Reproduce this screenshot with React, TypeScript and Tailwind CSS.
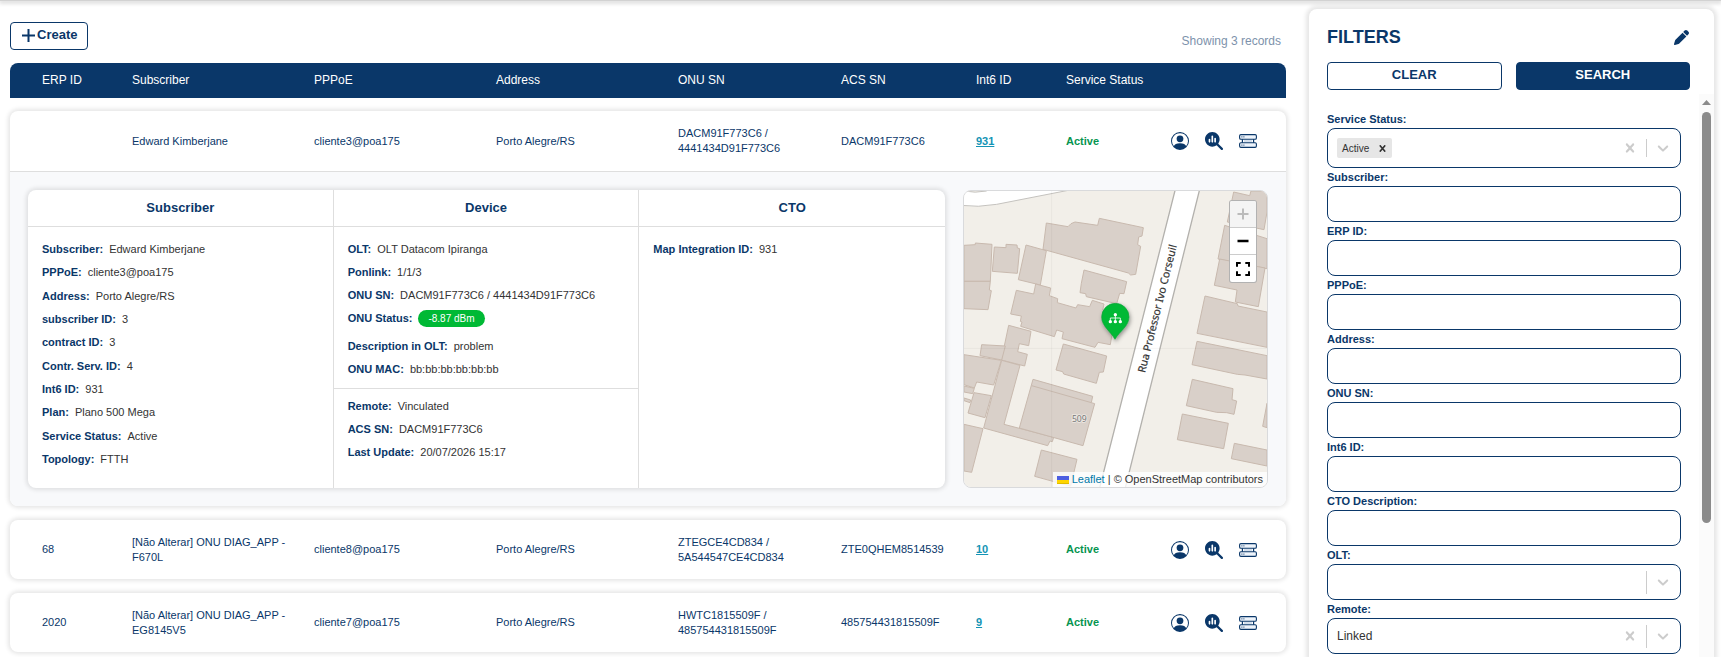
import React from "react";
import { BsPersonCircle } from "react-icons/bs";
import { FaMagnifyingGlassChart, FaPen } from "react-icons/fa6";

type Row = {
  erp: string;
  subscriber: string;
  pppoe: string;
  address: string;
  onu: string;
  acs: string;
  int6: string;
  status: string;
};

type Detail = { label: string; value: string; pill?: boolean };

const rows: Row[] = [
  { erp: "", subscriber: "Edward Kimberjane", pppoe: "cliente3@poa175", address: "Porto Alegre/RS", onu: "DACM91F773C6 / 4441434D91F773C6", acs: "DACM91F773C6", int6: "931", status: "Active" },
  { erp: "68", subscriber: "[Não Alterar] ONU DIAG_APP - F670L", pppoe: "cliente8@poa175", address: "Porto Alegre/RS", onu: "ZTEGCE4CD834 / 5A544547CE4CD834", acs: "ZTE0QHEM8514539", int6: "10", status: "Active" },
  { erp: "2020", subscriber: "[Não Alterar] ONU DIAG_APP - EG8145V5", pppoe: "cliente7@poa175", address: "Porto Alegre/RS", onu: "HWTC1815509F / 485754431815509F", acs: "485754431815509F", int6: "9", status: "Active" },
];

const subscriberDetails: Detail[] = [
  { label: "Subscriber:", value: "Edward Kimberjane" },
  { label: "PPPoE:", value: "cliente3@poa175" },
  { label: "Address:", value: "Porto Alegre/RS" },
  { label: "subscriber ID:", value: "3" },
  { label: "contract ID:", value: "3" },
  { label: "Contr. Serv. ID:", value: "4" },
  { label: "Int6 ID:", value: "931" },
  { label: "Plan:", value: "Plano 500 Mega" },
  { label: "Service Status:", value: "Active" },
  { label: "Topology:", value: "FTTH" },
];

const deviceDetails: Detail[] = [
  { label: "OLT:", value: "OLT Datacom Ipiranga" },
  { label: "Ponlink:", value: "1/1/3" },
  { label: "ONU SN:", value: "DACM91F773C6 / 4441434D91F773C6" },
  { label: "ONU Status:", value: "-8.87 dBm", pill: true },
  { label: "Description in OLT:", value: "problem" },
  { label: "ONU MAC:", value: "bb:bb:bb:bb:bb:bb" },
];

const remoteDetails: Detail[] = [
  { label: "Remote:", value: "Vinculated" },
  { label: "ACS SN:", value: "DACM91F773C6" },
  { label: "Last Update:", value: "20/07/2026 15:17" },
];

const ctoDetails: Detail[] = [{ label: "Map Integration ID:", value: "931" }];

const rowGrid =
  "grid grid-cols-[90fr_182fr_182fr_182fr_163fr_135fr_90fr_105fr_87fr] items-center pl-8 pr-7";
const cardShadow = "shadow-[0_0_4px_2px_rgba(0,0,0,0.1)]";

function ServerStackIcon() {
  return (
    <svg viewBox="0 0 18 14" className="h-[14px] w-[18px]" fill="none" stroke="currentColor" aria-hidden="true">
      <path d="M3.4 5v4M14.6 5v4" strokeWidth="1.2" />
      <path d="M5 7h8" stroke="#c3d3e6" strokeWidth="1.4" />
      <rect x="0.6" y="0.6" width="16.8" height="4.6" rx="1.3" strokeWidth="1.1" fill="#eef4fb" />
      <rect x="0.6" y="8.8" width="16.8" height="4.6" rx="1.3" strokeWidth="1.1" fill="#eef4fb" />
      <path d="M2.4 2.9h1M4.4 2.9h1M2.4 11.1h1M4.4 11.1h1" strokeWidth="1" />
    </svg>
  );
}

function CrossIcon({ className }: { className: string }) {
  return (
    <svg viewBox="0 0 20 20" className={className} fill="currentColor" aria-hidden="true">
      <path d="M14.348 14.849c-0.469 0.469-1.229 0.469-1.697 0l-2.651-3.030-2.651 3.029c-0.469 0.469-1.229 0.469-1.697 0-0.469-0.469-0.469-1.229 0-1.697l2.758-3.15-2.759-3.152c-0.469-0.469-0.469-1.228 0-1.697s1.228-0.469 1.697 0l2.652 3.031 2.651-3.031c0.469-0.469 1.228-0.469 1.697 0s0.469 1.229 0 1.697l-2.758 3.152 2.758 3.15c0.469 0.469 0.469 1.229 0 1.698z" />
    </svg>
  );
}

function ChevronIcon() {
  return (
    <svg viewBox="0 0 20 20" className="size-[18px] shrink-0" fill="currentColor" aria-hidden="true">
      <path d="M4.516 7.548c0.436-0.446 1.043-0.481 1.576 0l3.908 3.747 3.908-3.747c0.533-0.481 1.141-0.446 1.574 0 0.436 0.445 0.408 1.197 0 1.615-0.406 0.418-4.695 4.502-4.695 4.502-0.217 0.223-0.502 0.335-0.787 0.335s-0.57-0.112-0.789-0.335c0 0-4.287-4.084-4.695-4.502s-0.436-1.17 0-1.615z" />
    </svg>
  );
}

function DetailList({ items, className }: { items: Detail[]; className: string }) {
  return (
    <dl className={`flex flex-col px-[14px] text-[11px] leading-[15px] ${className}`}>
      {items.map((d) => (
        <div key={d.label} className={`flex h-[15px] items-center gap-[6px] ${d.pill ? "mb-[5px]" : ""}`}>
          <dt className="font-bold text-[#0a3769]">{d.label}</dt>
          {d.pill ? (
            <dd className="rounded-full bg-[#00b935] px-[10px] text-[10px] leading-[17px] text-white">{d.value}</dd>
          ) : (
            <dd className="text-[#333]">{d.value}</dd>
          )}
        </div>
      ))}
    </dl>
  );
}

function PanelHeading({ children }: { children: React.ReactNode }) {
  return (
    <h3 className="border-b border-[#dedede] pb-px text-center text-[13px] leading-[35px] font-bold text-[#0a3769]">
      {children}
    </h3>
  );
}

const buildings = [
  "42,196 76,194 76,189 126,193 121,304 42,304",
  "42,304 121,304 118,330 124,332 114,389 42,386",
  "133,201 168,203 168,193 201,195 202,204 209,206 202,280 127,274",
  "228,195 289,212 271,315 205,299",
  "289,129 354,140 363,131 375,126 443,136 448,115 580,143 576,168 566,171 563,194 572,199 557,283 542,285 535,279 279,208",
  "402,270 530,305 522,341 509,340 500,371 409,350 407,341 390,338 394,310",
  "257,312 302,324 298,347 323,356 322,368 378,384 383,374 419,380 427,361 462,372 458,390 496,400 481,494 444,487 435,502 336,476 340,456 320,450 313,470 212,439 216,426 211,424 214,408 182,402 199,331 251,342",
  "176,436 243,454 236,497 208,491 203,515 232,523 224,558 154,540",
  "95,494 166,498 155,540 90,527",
  "42,524 154,541 131,615 80,606 73,624 42,614",
  "42,618 73,625 68,641 42,636",
  "42,654 62,660 60,668 42,662",
  "72,638 124,647 105,713 54,699",
  "155,541 210,556 162,733 311,772 307,785 300,783 293,797 101,744",
  "249,598 428,649 424,668 434,671 399,797 208,744",
  "340,492 470,528 460,576 448,577 439,610 341,582 338,575 318,570",
  "42,733 99,746 65,877 42,873",
  "274,810 381,838 362,918 330,910 254,889",
  "851,36 899,47 903,33 951,33 951,96 942,149 832,126",
  "824,136 951,176 951,266 804,237",
  "809,237 945,264 925,380 856,366 861,330 793,316",
  "765,348 862,371 864,378 951,396 951,502 741,460",
  "741,484 951,527 951,597 885,585 862,583 726,554",
  "727,598 849,626 846,659 860,663 852,703 830,698 800,697 709,677",
  "697,702 835,730 821,806 682,779",
  "951,670 951,743 938,739",
  "853,790 951,810 951,858 844,836",
];

function MapDrawing() {
  return (
    <svg viewBox="42 33 909 888" preserveAspectRatio="xMidYMid slice" className="col-start-1 row-start-1 h-full w-full" role="img" aria-label="Street map">
      <defs>
        <filter id="pinShadow" x="-50%" y="-50%" width="200%" height="200%">
          <feDropShadow dx="3" dy="6" stdDeviation="7" floodColor="#000" floodOpacity="0.4" />
        </filter>
      </defs>
      <rect x="42" y="33" width="909" height="888" fill="#f2efe9" />
      <path d="M30 76 Q85 83 140 73 L370 28 L120 20 L110 33 Q75 40 42 33 L20 20z" fill="#fff" stroke="#c4c2be" strokeWidth="3" />
      <g fill="#d9d0c9" stroke="#c8b9ae" strokeWidth="3" strokeLinejoin="round">
        {buildings.map((points) => (
          <polygon key={points} points={points} />
        ))}
        <path d="M245 617L424 668" fill="none" />
      </g>
      <path d="M678 20L446 935L523 935L751 20z" fill="#fff" stroke="#b3b1ad" strokeWidth="4" />
      <path d="M305 33V921M42 505H951" stroke="#000" strokeOpacity="0.04" strokeWidth="3" />
      <text
        transform="translate(585 580) rotate(-76)"
        fontFamily='"Noto Sans", sans-serif'
        fontSize="32"
        fill="#333"
        stroke="#333"
        strokeWidth="0.6"
      >
        Rua Professor Ivo Corseuil
      </text>
      <text x="388" y="726" textAnchor="middle" fontFamily='"Noto Sans", sans-serif' fontSize="26" fill="#777" stroke="#eee9e4" strokeWidth="5" paintOrder="stroke">
        509
      </text>
      <g filter="url(#pinShadow)">
        <path d="M495 478C482 454 455 439 455 411A41 41 0 0 1 537 411C537 439 508 454 495 478z" fill="#00b935" stroke="#12a23c" strokeWidth="2" />
      </g>
      <g fill="#fff">
        <circle cx="496" cy="404" r="5" />
        <circle cx="481" cy="425" r="5" />
        <circle cx="496" cy="425" r="5" />
        <circle cx="511" cy="425" r="5" />
        <path d="M481 424V414H511V424M496 404V424" fill="none" stroke="#fff" strokeWidth="2.5" />
      </g>
    </svg>
  );
}

function SubscriberMap() {
  return (
    <div className="grid h-[298px] w-[305px] shrink-0 grid-cols-1 grid-rows-1 overflow-hidden rounded-lg border border-[#d9dadc]">
      <MapDrawing />
      <div className="z-10 col-start-1 row-start-1 mt-[9px] mr-[10px] flex w-7 flex-col self-start justify-self-end overflow-hidden rounded-[3px] border border-black/30 bg-white">
        <button type="button" aria-label="Zoom in" disabled className="flex h-[27px] items-center justify-center border-b border-[#ccc] bg-[#f4f4f4] text-[#bbb]">
          <svg viewBox="0 0 12 12" className="size-3" stroke="currentColor" strokeWidth="2" aria-hidden="true"><path d="M6 0.5v11M0.5 6h11" /></svg>
        </button>
        <button type="button" aria-label="Zoom out" className="flex h-[27px] items-center justify-center border-b border-[#ccc] text-black">
          <svg viewBox="0 0 12 12" className="size-3" stroke="currentColor" strokeWidth="2.4" aria-hidden="true"><path d="M0.5 6h11" /></svg>
        </button>
        <button type="button" aria-label="Full screen" className="flex h-[27px] items-center justify-center text-black">
          <svg viewBox="0 0 14 14" className="size-[14px]" fill="none" stroke="currentColor" strokeWidth="2" aria-hidden="true">
            <path d="M1 4.7V1H4.7M9.3 1H13V4.7M13 9.3V13H9.3M4.7 13H1V9.3" />
          </svg>
        </button>
      </div>
      <p className="z-10 col-start-1 row-start-1 flex items-center gap-[3px] self-end justify-self-end bg-white/80 px-1 text-[11px] leading-[15px] whitespace-pre text-[#333]">
        <svg viewBox="0 0 12 8" className="h-2 w-3" aria-hidden="true">
          <path fill="#4c5ee0" d="M0 0h12v4H0z" />
          <path fill="#ffd500" d="M0 4h12v3H0z" />
          <path fill="#e0bc00" d="M0 7h12v1H0z" />
        </svg>
        <span><a href="#leaflet" className="text-[#0078a8]">Leaflet</a> | © OpenStreetMap contributors</span>
      </p>
    </div>
  );
}

function ExpandedDetails() {
  return (
    <div className="flex gap-[18px] rounded-b-lg bg-[#f8f9fb] p-[18px]">
      <div className={`grid min-w-0 flex-1 grid-cols-3 divide-x divide-[#dedede] rounded-lg bg-white ${cardShadow}`}>
        <section className="flex flex-col">
          <PanelHeading>Subscriber</PanelHeading>
          <DetailList items={subscriberDetails} className="flex-1 justify-between pt-[15px] pb-[21px]" />
        </section>
        <section className="flex flex-col">
          <PanelHeading>Device</PanelHeading>
          <DetailList items={deviceDetails} className="gap-2 border-b border-[#dedede] pt-[15px] pb-[11px]" />
          <DetailList items={remoteDetails} className="gap-2 pt-[10px]" />
        </section>
        <section className="flex flex-col">
          <PanelHeading>CTO</PanelHeading>
          <DetailList items={ctoDetails} className="pt-[15px]" />
        </section>
      </div>
      <SubscriberMap />
    </div>
  );
}

function SubscriberTable() {
  return (
    <table className="mt-[13px] flex flex-col gap-[14px] text-left text-[11px] leading-[15px] text-[#0a3769]">
      <thead className="-mb-px block rounded-t-lg bg-[#0a3769] text-[12px] text-white">
        <tr className={`${rowGrid} h-[35px]`}>
          {["ERP ID", "Subscriber", "PPPoE", "Address", "ONU SN", "ACS SN", "Int6 ID", "Service Status"].map((h) => (
            <th key={h} scope="col" className="font-normal whitespace-nowrap">{h}</th>
          ))}
          <td></td>
        </tr>
      </thead>
      {rows.map((r, i) => (
        <tbody key={r.int6} className={`block rounded-lg bg-white ${cardShadow}`}>
          <tr className={`${rowGrid} ${i === 0 ? "h-[61px] border-b border-[#dedede]" : "h-[59px]"}`}>
            <td>{r.erp}</td>
            <td className="pr-6">{r.subscriber}</td>
            <td>{r.pppoe}</td>
            <td>{r.address}</td>
            <td className="pr-8">{r.onu}</td>
            <td>{r.acs}</td>
            <td><a href={`#int6-${r.int6}`} className="font-bold text-[#1494b5] underline">{r.int6}</a></td>
            <td className="font-bold text-[#069550]">{r.status}</td>
            <td className="flex items-center justify-between pr-px">
              <button type="button" aria-label="Subscriber profile"><BsPersonCircle className="size-[18px]" /></button>
              <button type="button" aria-label="Diagnostics"><FaMagnifyingGlassChart className="size-[18px]" /></button>
              <button type="button" aria-label="Equipment"><ServerStackIcon /></button>
            </td>
          </tr>
          {i === 0 && (
            <tr className="block">
              <td colSpan={9} className="block"><ExpandedDetails /></td>
            </tr>
          )}
        </tbody>
      ))}
    </table>
  );
}

function TextField({ label }: { label: string }) {
  const id = React.useId();
  return (
    <div className="flex flex-col">
      <label htmlFor={id} className="text-[11px] leading-[18px] font-bold">{label}</label>
      <input id={id} type="text" className="h-9 rounded-lg border border-[#0a3769] bg-white px-[9px] text-[12px] text-[#333] outline-none" />
    </div>
  );
}

function SelectField({ label, value, chip }: { label: string; value?: string; chip?: string }) {
  const id = React.useId();
  return (
    <div className="flex flex-col">
      <label htmlFor={id} className="text-[11px] leading-[18px] font-bold">{label}</label>
      <div className={`flex items-center rounded-lg border border-[#0a3769] bg-white pr-2 pl-[9px] text-[#ccc] ${chip ? "h-10" : "h-9"}`}>
        {chip && (
          <span className="flex h-5 items-center gap-[7px] rounded-xs bg-[#e6e6e6] pr-[3px] pl-[5px] text-[10px] text-[#333]">
            {chip}
            <button type="button" aria-label={`Remove ${chip}`}><CrossIcon className="size-[13px]" /></button>
          </span>
        )}
        <select id={id} defaultValue={value ?? ""} className="h-full min-w-0 flex-1 appearance-none bg-transparent text-[12px] text-[#333] outline-none">
          <option value=""></option>
          {value && <option value={value}>{value}</option>}
        </select>
        {(value || chip) && (
          <button type="button" aria-label={`Clear ${label}`} className="mr-[7px]"><CrossIcon className="size-[18px]" /></button>
        )}
        <span className={`mr-[7px] w-px bg-[#ccc] ${chip ? "h-[18px]" : "h-[23px]"}`}></span>
        <ChevronIcon />
      </div>
    </div>
  );
}

function Filters() {
  return (
    <aside className="mt-[9px] mr-[7px] flex w-[405px] shrink-0 flex-col rounded-t-lg bg-white text-[#0a3769] shadow-[0_0_4px_3px_rgba(0,0,0,0.1)]">
      <div className="flex items-center justify-between pt-[15px] pr-[25px] pl-[18px]">
        <h2 className="text-[18px] leading-[26px] font-bold">FILTERS</h2>
        <button type="button" aria-label="Edit filters"><FaPen className="size-[15px]" /></button>
      </div>
      <div className="mt-3 grid grid-cols-2 gap-[14px] pr-6 pl-[18px] text-[13px] font-bold">
        <button type="button" className="h-7 rounded border border-[#0a3769] pb-[3px]">CLEAR</button>
        <button type="button" className="h-7 rounded border border-[#0a3769] bg-[#0a3769] pb-[3px] text-white">SEARCH</button>
      </div>
      <div className="mt-1 flex min-h-0 flex-1">
        <form className="min-w-0 flex-1 overflow-hidden pt-4 pr-[18px] pl-[18px]">
          <SelectField label="Service Status:" chip="Active" />
          <TextField label="Subscriber:" />
          <TextField label="ERP ID:" />
          <TextField label="PPPoE:" />
          <TextField label="Address:" />
          <TextField label="ONU SN:" />
          <TextField label="Int6 ID:" />
          <TextField label="CTO Description:" />
          <SelectField label="OLT:" />
          <SelectField label="Remote:" value="Linked" />
        </form>
        <div className="flex w-[15px] flex-col items-center bg-[#fbfbfb]" aria-hidden="true">
          <svg viewBox="0 0 9 5" className="mt-[6px] h-[5px] w-[9px]"><path d="M4.5 0L9 5H0z" fill="#8b8b8b" /></svg>
          <div className="mt-[7px] h-[73%] w-[9px] rounded-full bg-[#8b8b8b]"></div>
        </div>
      </div>
    </aside>
  );
}

export default function App() {
  return (
    <div className='flex h-screen flex-col overflow-hidden bg-white font-["Liberation_Sans",Arial,sans-serif]'>
      <div className="z-10 -mb-px h-px shrink-0 bg-[#d2d2d2] shadow-[0_1px_4px_1px_rgba(0,0,0,0.2)]"></div>
      <div className="flex min-h-0 flex-1 gap-[23px]">
        <main className="min-w-0 flex-1 pt-[22px] pl-[10px]">
          <div className="flex items-end justify-between pr-[5px]">
            <button type="button" className="flex h-7 items-center gap-[2px] rounded border border-[#0a3769] pr-[10px] pb-[2px] pl-[11px] text-[13px] font-bold text-[#0a3769]">
              <svg viewBox="0 0 13 13" className="size-[13px]" stroke="currentColor" strokeWidth="2" aria-hidden="true"><path d="M6.5 0v13M0 6.5h13" /></svg>
              Create
            </button>
            <span className="text-[12px] leading-[18px] text-[#7d92ab]">Showing 3 records</span>
          </div>
          <SubscriberTable />
        </main>
        <Filters />
      </div>
    </div>
  );
}
